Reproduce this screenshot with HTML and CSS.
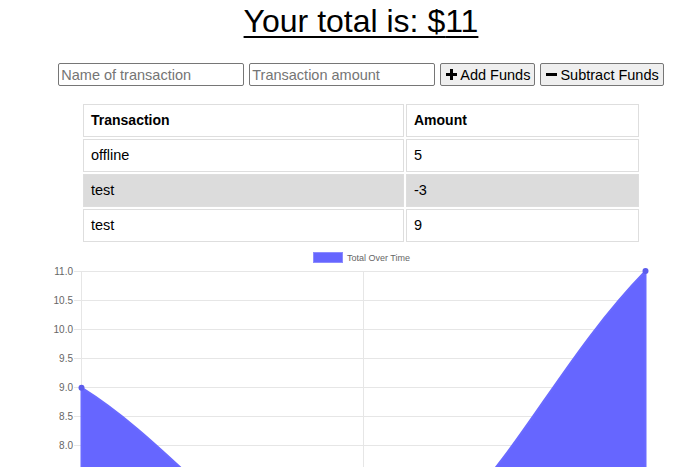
FILE: index.html
```html
<!DOCTYPE html>
<html>
<head>
<meta charset="utf-8">
<link rel="stylesheet" href="styles.css">
</head>
<body>
<div class="page">
  <h1 class="total">Your total is: $<span>11</span></h1>
  <form class="form-row">
    <input class="field" type="text" placeholder="Name of transaction">
    <input class="field" type="number" placeholder="Transaction amount">
    <button class="btn" type="button"><svg class="ico" viewBox="0 0 11 11"><rect x="4" y="0" width="3" height="11"/><rect x="0" y="4" width="11" height="3"/></svg>Add Funds</button>
    <button class="btn" type="button"><svg class="ico" viewBox="0 0 11 11"><rect x="0" y="4" width="11" height="3"/></svg>Subtract Funds</button>
  </form>
  <table class="tx">
    <colgroup><col class="c1"><col class="c2"></colgroup>
    <thead><tr><th>Transaction</th><th>Amount</th></tr></thead>
    <tbody>
      <tr><td>offline</td><td>5</td></tr>
      <tr class="neg"><td>test</td><td>-3</td></tr>
      <tr><td>test</td><td>9</td></tr>
    </tbody>
  </table>
</div>
<svg class="chart" viewBox="0 245 700 222" width="700" height="222">
  <g class="legend">
    <rect x="313.5" y="252.5" width="29" height="10" fill="#6666ff" stroke="#8c8cff" stroke-width="1"/>
    <text x="347" y="261">Total Over Time</text>
  </g>
  <g class="grid" stroke="#e6e6e6" stroke-width="1">
    <line x1="74" y1="271.5" x2="645" y2="271.5"/>
    <line x1="74" y1="300.5" x2="645" y2="300.5"/>
    <line x1="74" y1="329.5" x2="645" y2="329.5"/>
    <line x1="74" y1="358.5" x2="645" y2="358.5"/>
    <line x1="74" y1="387.5" x2="645" y2="387.5"/>
    <line x1="74" y1="416.5" x2="645" y2="416.5"/>
    <line x1="74" y1="445.5" x2="645" y2="445.5"/>
    <line x1="81.5" y1="271" x2="81.5" y2="467"/>
    <line x1="363.5" y1="271" x2="363.5" y2="467"/>
    <line x1="645.5" y1="271" x2="645.5" y2="467"/>
  </g>
  <g class="ylabels">
    <text x="73" y="274.5">11.0</text>
    <text x="73" y="303.5">10.5</text>
    <text x="73" y="332.5">10.0</text>
    <text x="73" y="361.5">9.5</text>
    <text x="73" y="390.5">9.0</text>
    <text x="73" y="419.5">8.5</text>
    <text x="73" y="448.5">8.0</text>
  </g>
  <path d="M81.5 387.7 C194 457.8 262 584 363.5 563 C487 537.3 532 387.8 645.5 271 L645.5 600 L81.5 600 Z" fill="#6666ff" stroke="#6a6aff" stroke-width="2"/>
  <circle cx="81.5" cy="387.7" r="3" fill="#5c5cec"/>
  <circle cx="645.5" cy="271" r="3" fill="#5c5cec"/>
</svg>
</body>
</html>
```
FILE: styles.css
```css
html, body {
  margin: 0;
  padding: 0;
  background: #fff;
  overflow: hidden;
}
body {
  font-family: "Liberation Sans", Arial, sans-serif;
  color: #000;
}
.page {
  margin-left: 22px;
  width: 678px;
}
.total {
  margin: 0;
  padding-top: 3px;
  text-align: center;
  font-size: 32px;
  line-height: 36px;
  font-weight: normal;
  text-decoration: underline;
  text-decoration-thickness: 2px;
  text-underline-offset: 4px;
}
.form-row {
  display: flex;
  gap: 5px;
  justify-content: center;
  margin-top: 24px;
}
.field {
  box-sizing: border-box;
  width: 186px;
  height: 23px;
  margin: 0;
  padding: 1px 2px;
  border: 1px solid #767676;
  border-radius: 2px;
  font-family: "Liberation Sans", Arial, sans-serif;
  font-size: 14.5px;
  color: #000;
  background: #fff;
}
.field::placeholder {
  color: #757575;
}
.field::-webkit-outer-spin-button,
.field::-webkit-inner-spin-button {
  -webkit-appearance: none;
  margin: 0;
}
.btn {
  box-sizing: border-box;
  height: 23px;
  margin: 0;
  padding: 0 4px 0 5px;
  display: flex;
  align-items: center;
  gap: 3px;
  border: 1px solid #767676;
  border-radius: 2px;
  background: #efefef;
  font-family: "Liberation Sans", Arial, sans-serif;
  font-size: 14.5px;
  color: #000;
}
.ico {
  width: 11px;
  height: 11px;
  fill: #000;
}
.tx {
  margin: 16px auto 0;
  width: 560px;
  border-collapse: separate;
  border-spacing: 2px;
  table-layout: fixed;
  font-size: 14.5px;
}
.c1 { width: 321px; }
.c2 { width: 233px; }
.tx th, .tx td {
  border: 1px solid #dedede;
  padding: 8px 7px;
  line-height: 15px;
  text-align: left;
}
.tx th {
  font-weight: bold;
  font-size: 14px;
}
.tx .neg td {
  background: #dcdcdc;
}
.chart {
  display: block;
  margin-top: 1px;
}
.legend text {
  font-family: "Liberation Sans", Arial, sans-serif;
  font-size: 9px;
  fill: #666;
}
.ylabels text {
  font-family: "Liberation Sans", Arial, sans-serif;
  font-size: 10px;
  fill: #666;
  text-anchor: end;
}
```
